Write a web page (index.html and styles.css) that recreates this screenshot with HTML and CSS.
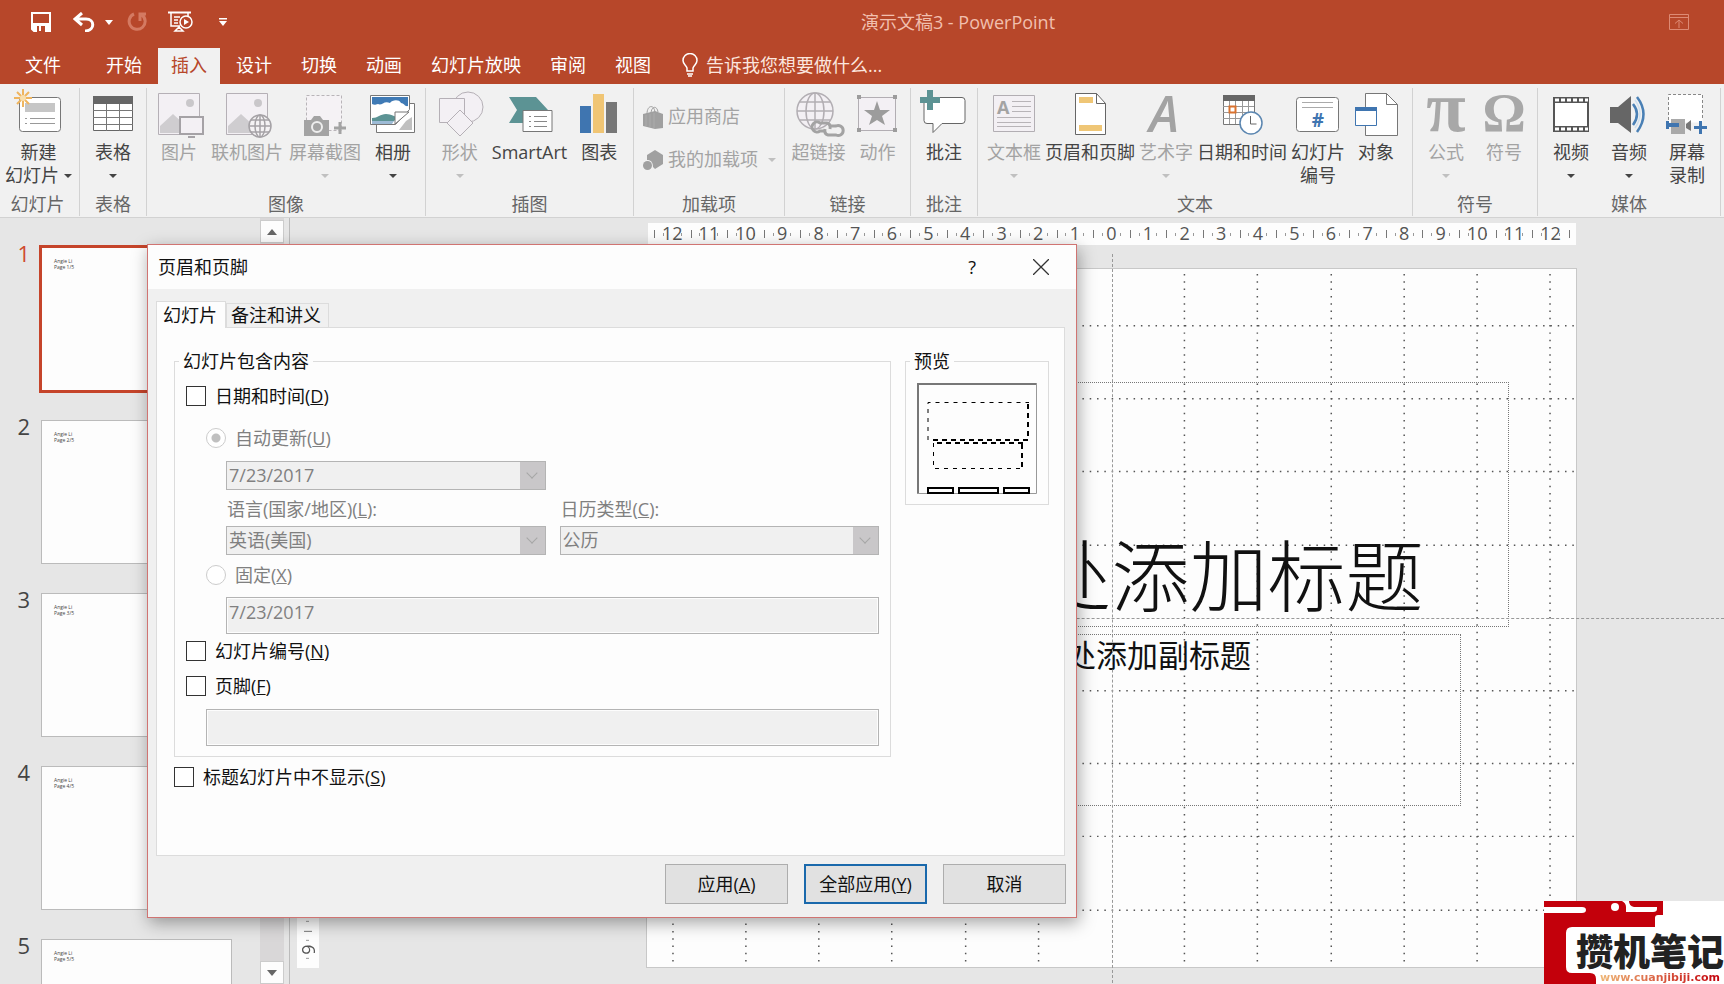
FILE: index.html
```html
<!DOCTYPE html>
<html lang="zh-CN">
  <head>
    <meta charset="UTF-8" />
    <meta name="viewport" content="width=device-width, initial-scale=1.0" />
    <title>演示文稿3 - PowerPoint</title>
    <link rel="stylesheet" href="styles.css">
  </head>
  <body>
    <header class="header">
      <div class="titlebar">
        <div class="quick">
          <button class="q-save" aria-label="保存">
            <svg width="20" height="20" viewBox="0 0 20 20"><path d="M1 1h18v18H3l-2-2z" fill="none" stroke="#fff" stroke-width="2"/><path d="M2 11h16v8H2z" fill="#fff"/><path d="M6 14h8v6H6z" fill="#b7472a"/><path d="M8 14h2v5H8z" fill="#fff"/></svg>
          </button>
          <button class="q-undo" aria-label="撤消">
            <svg width="22" height="20" viewBox="0 0 22 20"><path d="M9 1L2 7l7 6M3 7h10c9 0 9 11 0 12h-1" fill="none" stroke="#fff" stroke-width="3"/></svg>
            <svg width="8" height="5" viewBox="0 0 8 5"><path d="M0 0h8L4 5z" fill="#fff"/></svg>
          </button>
          <button class="q-redo" aria-label="重复">
            <svg width="20" height="20" viewBox="0 0 20 20"><path d="M7 2a8 8 0 1 0 8 1M19 2h-6v7" fill="none" stroke="#d47a62" stroke-width="3"/></svg>
          </button>
          <button class="q-show" aria-label="从头开始">
            <svg width="25" height="22" viewBox="0 0 25 22" fill="none" stroke="#fff" stroke-width="1.5"><path d="M0 1.500h23" stroke-width="2"/><path d="M3 2v13h9M20 2v4M6 6h6M6 9h4M6 12h4M11 16l-4 4h8l-4-4"/><circle cx="18" cy="11" r="6"/><path d="M16 8l5 3-5 3z" fill="#fff" stroke="none"/></svg>
          </button>
          <button class="q-more" aria-label="自定义快速访问工具栏">
            <svg width="8" height="8" viewBox="0 0 8 8" fill="#fff"><path d="M0 0h8v1.500H0zM0 3h8L4 8z"/></svg>
          </button>
        </div>
        <div class="doc-title">演示文稿3 - PowerPoint</div>
        <button class="pin" aria-label="功能区显示选项">
          <svg width="20" height="16" viewBox="0 0 20 16" fill="none" stroke="#dd8a74"><path d="M.5.5h19v15H.5zM.5 3.500h19M10 14V6M6 9.500L10 6l4 3.500"/></svg>
        </button>
      </div>
      <nav class="tabs">
        <button class="file">文件</button>
        <button>开始</button>
        <button class="active">插入</button>
        <button>设计</button>
        <button>切换</button>
        <button>动画</button>
        <button>幻灯片放映</button>
        <button>审阅</button>
        <button>视图</button>
        <button class="tell">
          <svg width="16" height="24" viewBox="0 0 16 24" fill="none" stroke="#fff" stroke-width="1.500"><path d="M5 18v-3C4 12 1 11 1 7.500a7 7 0 0 1 14 0C15 11 12 12 11 15v3z"/><path d="M5 21h6M6 23h4"/></svg>
          告诉我您想要做什么...
        </button>
      </nav>
    </header>

    <div class="ribbon">
      <!-- 幻灯片 -->
      <section class="group g-slide">
        <div class="tools">
          <button class="tool">
            <svg viewBox="0 0 50 50"><rect x="5.500" y="9.500" width="41" height="34" rx="3" fill="#fff" stroke="#777"/><path d="M11 15h30v9H11z" fill="#c6c6c6"/><path d="M11 30.500h2m3 0h25M11 35.500h2m3 0h25" stroke="#999"/><path d="M9 1v18M0 10h18M3 4l12 12M15 4L3 16" stroke="#efb55f" stroke-width="2"/><circle cx="9" cy="10" r="3" fill="#f9dfae"/></svg>
            <span>新建</span>
            <span class="with-arrow">幻灯片<i class="arrow"></i></span>
          </button>
        </div>
        <h2>幻灯片</h2>
      </section>
      <!-- 表格 -->
      <section class="group g-one">
        <div class="tools">
          <button class="tool">
            <svg viewBox="0 0 50 50"><path d="M5.500 8.500h39v34h-39z" fill="#fff" stroke="#666"/><path d="M5 8h40v8H5z" fill="#666"/><path d="M18.500 16v27M31.500 16v27M5 22.500h40M5 29.500h40M5 36.500h40" stroke="#777"/></svg>
            <span>表格</span>
            <i class="arrow"></i>
          </button>
        </div>
        <h2>表格</h2>
      </section>
      <!-- 图像 -->
      <section class="group g-image">
        <div class="tools">
          <button class="tool" disabled>
            <svg viewBox="0 0 50 50"><path d="M4.500 5.500h41v41h-41z" fill="#f3f0f4" stroke="#b5b0b6"/><circle cx="36" cy="15" r="4" fill="#c9c7ca"/><path d="M6 45V38L19 26l12 11v8z" fill="#cfcdd0"/><path d="M26 29h23v17H26z" fill="#f3f0f4" stroke="#a5a2a6" stroke-width="2"/><path d="M34 49h7" stroke="#a5a2a6" stroke-width="2"/></svg>
            <span>图片</span>
          </button>
          <button class="tool" disabled>
            <svg viewBox="0 0 50 50"><path d="M4.500 5.500h41v41h-41z" fill="#f3f0f4" stroke="#b5b0b6"/><circle cx="36" cy="15" r="4" fill="#c9c7ca"/><path d="M6 45V38L19 26l12 11v8z" fill="#cfcdd0"/><g fill="none" stroke="#a5a2a6" stroke-width="1.500"><circle cx="38" cy="38" r="11" fill="#f5f3f5"/><ellipse cx="38" cy="38" rx="5" ry="11"/><path d="M38 27v22M27 38h22M29 32h18M29 44h18"/></g></svg>
            <span>联机图片</span>
          </button>
          <button class="tool" disabled>
            <svg viewBox="0 0 50 50"><path d="M6.500 7.500h35v35h-35z" fill="#f5f2f5" stroke="#b8b4b8" stroke-dasharray="3 2"/><path d="M4 32h7l3-4h6l3 4h6v16H4z" fill="#a3a3a3"/><circle cx="17" cy="39" r="5" fill="none" stroke="#eee" stroke-width="2"/><path d="M40 34v12M34 40h12" stroke="#a3a3a3" stroke-width="3"/></svg>
            <span>屏幕截图</span>
            <i class="arrow"></i>
          </button>
          <button class="tool">
            <svg viewBox="0 0 50 50"><path d="M8.500 15.500h38v29h-38z" fill="#fff" stroke="#777"/><path d="M11 42h33V29l-6 4-7 9z" fill="#c0c0c0"/><path d="M2.500 7.500h39v14l-14 15h-25z" fill="#fff" stroke="#777"/><path d="M4 9h36v9c-3 1-4-3-7-3-2-4-9-3-11 0-6-3-8 3-12 1-3 1-4 1-6 0z" fill="#3f7ab5"/><path d="M4 30c6 0 8-4 14-4s8 3 12 3l-4 4-22 1z" fill="#5c9394"/><path d="M4 33h22l-2 3H4z" fill="#9dbbd6"/><path d="M27 36V24h14z" fill="#fff" stroke="#777"/></svg>
            <span>相册</span>
            <i class="arrow"></i>
          </button>
        </div>
        <h2>图像</h2>
      </section>
      <!-- 插图 -->
      <section class="group g-art">
        <div class="tools">
          <button class="tool" disabled>
            <svg viewBox="0 0 50 50" fill="#f3f0f4" stroke="#b5b0b6"><circle cx="33" cy="19" r="15"/><path d="M4.500 10.500h25v24h-25z"/><path d="M25 22l13 13-13 13-13-13z"/></svg>
            <span>形状</span>
            <i class="arrow"></i>
          </button>
          <button class="tool">
            <svg viewBox="0 0 50 50"><path d="M4 9h27l12 13-12 13H4l8-13z" fill="#5c9394"/><path d="M18 22.500h29v21H18z" fill="#fff" stroke="#777"/><path d="M24 28.500h2m3 0h13M24 33.500h2m3 0h13M24 38.500h2m3 0h13" stroke="#888"/></svg>
            <span>SmartArt</span>
          </button>
          <button class="tool">
            <svg viewBox="0 0 50 50"><path d="M6 18h11v27H6z" fill="#3f75b0"/><path d="M19 6h11v39H19z" fill="#f0c574"/><path d="M32 14h11v31H32z" fill="#777"/></svg>
            <span>图表</span>
          </button>
        </div>
        <h2>插图</h2>
      </section>
      <!-- 加载项 -->
      <section class="group g-addin">
        <div class="tools rows">
          <button class="row-tool" disabled>
            <svg width="20" height="24" viewBox="0 0 20 24"><path d="M0 9l12-3 8 3v14l-8 1-12-3z" fill="#a0a0a0"/><path d="M4 9C4 0 11-1 12 7M8 9c0-8 6-9 7-2" fill="none" stroke="#a0a0a0"/><path d="M3 10v11M7 9v13M11 8v15" stroke="#acacac"/></svg>
            <span>应用商店</span>
          </button>
          <button class="row-tool" disabled>
            <svg width="20" height="20" viewBox="0 0 20 20" fill="#a0a0a0"><path d="M4 5l8-5 8 5v9l-8 5-2-2c0-6-3-7-6-7z"/><circle cx="4.500" cy="15.500" r="4.500"/></svg>
            <span>我的加载项</span>
            <i class="arrow"></i>
          </button>
        </div>
        <h2>加载项</h2>
      </section>
      <!-- 链接 -->
      <section class="group g-link">
        <div class="tools">
          <button class="tool" disabled>
            <svg viewBox="0 0 50 50" fill="none"><g stroke="#b2aeb3" stroke-width="1.500"><circle cx="21" cy="23" r="18" fill="#f3f0f4"/><ellipse cx="21" cy="23" rx="9" ry="18"/><path d="M21 5v36M3 23h36M6 14h30M6 32h30"/></g><path d="M32 43h-6a5 5 0 1 1 0-8h7q4 1 3 6M35 38h7a5 5 0 1 1 0 9h-8q-4-1-3-6" stroke="#a3a3a3" stroke-width="3"/></svg>
            <span>超链接</span>
          </button>
          <button class="tool" disabled>
            <svg viewBox="0 0 50 50"><path d="M5.500 9.500h37v33h-37z" fill="#f3f0f4" stroke="#b2aeb3"/><path d="M4 7h4v4H4zM40 7h4v4h-4zM4 40h4v4H4zM40 40h4v4h-4zM24 13l3 9h10l-8 6 3 9-8-5-8 5 3-9-8-6h10z" fill="#9c9c9c"/></svg>
            <span>动作</span>
          </button>
        </div>
        <h2>链接</h2>
      </section>
      <!-- 批注 -->
      <section class="group g-one">
        <div class="tools">
          <button class="tool">
            <svg viewBox="0 0 50 50"><path d="M7 9.500h36q3 0 3 3v20q0 3-3 3H23l-9 9v-9H8q-3 0-3-3V12q0-3 2-2.500z" fill="#fff" stroke="#666"/><path d="M8 2h6v7h7v6h-7v7H8v-7H1V9h7z" fill="#5c9394"/></svg>
            <span>批注</span>
          </button>
        </div>
        <h2>批注</h2>
      </section>
      <!-- 文本 -->
      <section class="group g-text">
        <div class="tools">
          <button class="tool" disabled>
            <svg viewBox="0 0 50 50"><path d="M4.500 7.500h41v36h-41z" fill="#f3f0f4" stroke="#b2aeb3"/><text x="8" y="26" class="ico-a">A</text><path d="M23 13.500h19M23 18.500h19M23 23.500h19M8 29.500h34M8 34.500h34M8 38.500h34" stroke="#b8b4b8"/></svg>
            <span>文本框</span>
            <i class="arrow"></i>
          </button>
          <button class="tool">
            <svg viewBox="0 0 50 50"><path d="M10.500 5.500h21l9 10v31h-30z" fill="#fff" stroke="#666"/><path d="M31.500 5.500v10h9" fill="none" stroke="#666"/><path d="M14 9h14v6H14zM14 37h23v6H14z" fill="#efc676"/></svg>
            <span>页眉和页脚</span>
          </button>
          <button class="tool" disabled>
            <svg viewBox="0 0 50 50"><text x="23" y="44" class="ico-art">A</text></svg>
            <span>艺术字</span>
            <i class="arrow"></i>
          </button>
          <button class="tool">
            <svg viewBox="0 0 50 50"><path d="M6.500 7.500h31v29h-31z" fill="#fff" stroke="#777"/><path d="M6 7h32v6H6z" fill="#666"/><path d="M12.500 13v23M18.500 13v23M25.500 13v23M31.500 13v23M6 18.500h31M6 24.500h31M6 30.500h31" stroke="#999"/><path d="M12.500 18.500h6v6h-6z" fill="#fff" stroke="#d9722f" stroke-width="2"/><circle cx="34" cy="35" r="11" fill="#fff" stroke="#5b86b0" stroke-width="1.500"/><path d="M33.500 28v8h6" fill="none" stroke="#666"/></svg>
            <span>日期和时间</span>
          </button>
          <button class="tool">
            <svg viewBox="0 0 50 50"><rect x="3.500" y="9.500" width="42" height="34" rx="3" fill="#fff" stroke="#777"/><path d="M9 14.500h31M9 19.500h31" stroke="#aaa"/><text x="25" y="39" class="ico-hash">#</text></svg>
            <span>幻灯片</span>
            <span>编号</span>
          </button>
          <button class="tool">
            <svg viewBox="0 0 50 50"><path d="M14.500 5.500h21l11 11v31h-32z" fill="#fff" stroke="#777"/><path d="M35.500 5.500v11h11" fill="none" stroke="#777"/><path d="M4.500 19.500h21v18h-21z" fill="#fff" stroke="#3f75b0"/><path d="M4 19h22v4H4z" fill="#3f75b0"/></svg>
            <span>对象</span>
          </button>
        </div>
        <h2>文本</h2>
      </section>
      <!-- 符号 -->
      <section class="group g-symbol">
        <div class="tools">
          <button class="tool" disabled>
            <svg viewBox="0 0 50 50"><text x="25" y="43" class="ico-pi">π</text></svg>
            <span>公式</span>
            <i class="arrow"></i>
          </button>
          <button class="tool" disabled>
            <svg viewBox="0 0 50 50"><text x="25" y="43" class="ico-omega">Ω</text></svg>
            <span>符号</span>
          </button>
        </div>
        <h2>符号</h2>
      </section>
      <!-- 媒体 -->
      <section class="group g-media">
        <div class="tools">
          <button class="tool">
            <svg viewBox="0 0 50 50"><path d="M7 9h36v35H7z" fill="#555"/><path d="M9 15h32v23H9z" fill="#fff"/><path d="M9 12h33M9 41h33" stroke="#fff" stroke-width="3" stroke-dasharray="4 2"/></svg>
            <span>视频</span>
            <i class="arrow"></i>
          </button>
          <button class="tool">
            <svg viewBox="0 0 50 50"><path d="M6 19h8L27 8v37L14 35H6z" fill="#666"/><path d="M29 16q8 10 0 21M33 9q13 17 0 35" fill="none" stroke="#4a80b5" stroke-width="2.500"/><path d="M31 12q10 14 0 28" fill="none" stroke="#cfe0ee" stroke-width="1.500"/></svg>
            <span>音频</span>
            <i class="arrow"></i>
          </button>
          <button class="tool">
            <svg viewBox="0 0 50 50"><path d="M6.500 6.500h34v28h-34z" fill="#fff"/><path d="M6.500 32V6.500h34V32" fill="none" stroke="#888" stroke-dasharray="3 2"/><path d="M9 31h14v15H9z" fill="#a9a9a9"/><path d="M24 36l5-4v11l-5-3z" fill="#777"/><path d="M4 33h3v2h10v4H7v2H4zM37 33h3v5h5v3h-5v5h-3v-5h-5v-3h5z" fill="#3f75b0"/></svg>
            <span>屏幕</span>
            <span>录制</span>
          </button>
        </div>
        <h2>媒体</h2>
      </section>
    </div>

    <main class="workspace">
      <aside class="pane">
        <ol class="thumbs">
          <li class="current"><b>1</b><div class="thumb">Angie Li<br>Page 1/5</div></li>
          <li><b>2</b><div class="thumb">Angie Li<br>Page 2/5</div></li>
          <li><b>3</b><div class="thumb">Angie Li<br>Page 3/5</div></li>
          <li><b>4</b><div class="thumb">Angie Li<br>Page 4/5</div></li>
          <li><b>5</b><div class="thumb">Angie Li<br>Page 5/5</div></li>
        </ol>
        <div class="scrollbar">
          <button aria-label="向上"><svg width="10" height="6" viewBox="0 0 12 7"><path d="M0 7h12L6 0z" fill="#666"/></svg></button>
          <button aria-label="向下"><svg width="10" height="6" viewBox="0 0 12 7"><path d="M0 0h12L6 7z" fill="#666"/></svg></button>
        </div>
      </aside>

      <div class="editor">
        <div class="ruler">
          <span>12</span><span>11</span><span>10</span><span>9</span><span>8</span><span>7</span><span>6</span><span>5</span><span>4</span><span>3</span><span>2</span><span>1</span><span>0</span><span>1</span><span>2</span><span>3</span><span>4</span><span>5</span><span>6</span><span>7</span><span>8</span><span>9</span><span>10</span><span>11</span><span>12</span>
        </div>
        <div class="ruler-v">
          <span>9</span><span>8</span><span>7</span><span>6</span><span>5</span><span>4</span><span>3</span><span>2</span><span>1</span><span>0</span><span>1</span><span>2</span><span>3</span><span>4</span><span>5</span><span>6</span><span>7</span><span>8</span><span>9</span>
        </div>
        <div class="slide">
          <svg class="grid-lines" viewBox="0 0 930 700" preserveAspectRatio="none">
            <g stroke="#555" stroke-width="1.500" stroke-dasharray="1.500 5.820">
              <path d="M26 5v695M99 5v695M172 5v695M245 5v695M319 5v695M392 5v695M538 5v695M611 5v695M685 5v695M758 5v695M831 5v695M904 5v695"/>
              <path d="M4 57h926M4 130h926M4 203h926M4 277h926M4 423h926M4 496h926M4 569h926M4 643h926"/>
            </g>
          </svg>
          <div class="holder title-holder">单击此处添加标题</div>
          <div class="holder sub-holder">单击此处添加副标题</div>
          <i class="guide-v"></i>
          <i class="guide-h"></i>
        </div>
      </div>

      <!-- 页眉和页脚 对话框 -->
      <form class="dialog" role="dialog" aria-labelledby="dialogTitle">
        <div class="dialog-title">
          <h1 id="dialogTitle">页眉和页脚</h1>
          <button type="button" class="help" aria-label="帮助">?</button>
          <button type="button" class="close" aria-label="关闭"><svg width="16" height="16" viewBox="0 0 16 16"><path d="M0 0l16 16M16 0L0 16" stroke="#333" stroke-width="1.300"/></svg></button>
        </div>
        <div class="dialog-tabs">
          <button type="button" class="active">幻灯片</button>
          <button type="button">备注和讲义</button>
        </div>
        <div class="panel">
          <div class="columns">
            <fieldset class="content">
              <legend>幻灯片包含内容</legend>
              <label class="option date"><input type="checkbox">日期和时间(<u>D</u>)</label>
              <label class="option sub auto off"><input type="radio" name="dateMode" checked disabled>自动更新(<u>U</u>)</label>
              <div class="pair">
                <span class="combo"><select aria-label="日期格式" disabled><option>7/23/2017</option></select></span>
              </div>
              <div class="pair captions off">
                <label for="lang">语言(国家/地区)(<u>L</u>):</label>
                <label for="calendar">日历类型(<u>C</u>):</label>
              </div>
              <div class="pair">
                <span class="combo"><select id="lang" disabled><option>英语(美国)</option></select></span>
                <span class="combo"><select id="calendar" disabled><option>公历</option></select></span>
              </div>
              <label class="option sub fixed off"><input type="radio" name="dateMode" disabled>固定(<u>X</u>)</label>
              <input class="field fixed-date" type="text" value="7/23/2017" aria-label="固定日期" disabled>
              <label class="option number"><input type="checkbox">幻灯片编号(<u>N</u>)</label>
              <label class="option footer"><input type="checkbox">页脚(<u>F</u>)</label>
              <input class="field footer-text" type="text" aria-label="页脚" disabled>
            </fieldset>
            <fieldset class="preview">
              <legend>预览</legend>
              <svg width="120" height="111" viewBox="0 0 120 111" fill="none" stroke="#000"><path d="M1 110V1h118" stroke="#777" stroke-width="2"/><path d="M119.500 0v110.500H0" stroke="#999"/><path d="M11 57V19.500h101" stroke-dasharray="4 5"/><path d="M111 21v34" stroke-width="2" stroke-dasharray="5 4"/><path d="M16 57h95M20 60h86" stroke-width="2" stroke-dasharray="5 4"/><path d="M105 61v24" stroke-width="2" stroke-dasharray="5 4"/><path d="M16.500 60v25.500H105" stroke-dasharray="4 5"/><path d="M11 105h25v5H11zM42 105h39v5H42zM87 105h25v5H87z" stroke-width="2"/></svg>
            </fieldset>
          </div>
          <label class="option hide-title"><input type="checkbox">标题幻灯片中不显示(<u>S</u>)</label>
        </div>
        <div class="actions">
          <button type="button">应用(<u>A</u>)</button>
          <button type="button" class="default">全部应用(<u>Y</u>)</button>
          <button type="button">取消</button>
        </div>
      </form>

      <div class="watermark">
        <svg width="180" height="83" viewBox="0 0 180 83"><path d="M0 0h119v14h-5q-3 0-3 3v9h-83q-6 0-6 6v34q0 6 6 6h18q6 0 6 6v5H0z" fill="#c3000b"/><path d="M0 6h38q4 0 4 3t-4 3H0zM78 0q4 2 4 6v5h27q4 0 4-3V6H90q-5-1-5-6z" fill="#fff"/><circle cx="71" cy="6" r="4" fill="#fff"/></svg>
        <strong>攒机笔记</strong>
        <span>www.cuanjibiji.com</span>
      </div>
    </main>
  </body>
</html>
```

FILE: styles.css
```css
* {
  box-sizing: border-box;
}

body {
  margin: 0;
  height: 100vh;
  display: flex;
  flex-direction: column;
  overflow: hidden;
  background: #e6e6e6;
  color: #444;
  font-family: "Open Sans", "Noto Sans CJK SC", sans-serif;
  font-size: 18px;
  line-height: 23px;
}

button {
  margin: 0;
  padding: 0;
  border: 0;
  background: none;
  color: inherit;
  font: inherit;
}

svg {
  display: block;
}

/* 标题栏 */
.header {
  background: #b7472a;
  color: #fff;
}

.titlebar {
  display: flex;
  align-items: center;
  height: 48px;
  padding-bottom: 4px;
}

.quick {
  display: flex;
  align-items: center;
  width: 250px;
  padding-left: 31px;
}

.q-undo {
  display: flex;
  align-items: center;
  gap: 10px;
  margin: 0 14px 0 22px;
}

.q-show {
  margin: 0 26px 0 21px;
}

.doc-title {
  flex: 1;
  text-align: center;
  color: #f1bfae;
}

.pin {
  width: 58px;
  padding-left: 3px;
}

.tabs {
  display: flex;
  gap: 3px;
  height: 36px;
}

.tabs button {
  padding: 0 13px 2px;
}

.tabs .file {
  width: 86px;
  margin-right: 4px;
}

.tabs .active {
  background: #f1f1f1;
  color: #b7472a;
}

.tabs .tell {
  display: flex;
  align-items: center;
  gap: 8px;
  padding-left: 15px;
  color: #fbe6df;
}

/* 功能区 */
.ribbon {
  display: flex;
  height: 134px;
  padding: 4px 0 0;
  background: #f1f1f1;
  border-bottom: 1px solid #d2d2d2;
}

.group {
  flex: none;
  display: flex;
  flex-direction: column;
  height: 128px;
  border-right: 1px solid #d2d2d2;
}

.g-slide { width: 80px; }
.g-one { width: 67px; }
.g-image { width: 279px; }
.g-art { width: 208px; }
.g-addin { width: 151px; }
.g-link { width: 126px; }
.g-text { width: 435px; }
.g-symbol { width: 125px; }
.g-media { width: 183px; }

.group h2 {
  margin: 0;
  font-size: 18px;
  font-weight: 400;
  line-height: 23px;
  text-align: center;
  color: #666;
}

.g-slide,
.g-slide h2 {
  padding-right: 2px;
}

.tools {
  flex: 1;
  display: flex;
  justify-content: center;
}

.tool {
  flex: none;
  display: flex;
  flex-direction: column;
  align-items: center;
  min-width: 58px;
  padding: 0 3px;
  white-space: nowrap;
}

.g-text .tool {
  padding: 0 2px;
}

.tool svg {
  width: 50px;
  height: 50px;
  margin-bottom: 3px;
  overflow: visible;
}

.tool:disabled,
.row-tool:disabled {
  color: #a3a3a3;
}

.arrow {
  width: 0;
  height: 0;
  border: 4px solid transparent;
  border-top-color: currentColor;
  border-bottom: 0;
}

.tool > .arrow {
  margin-top: 10px;
}

:disabled > .arrow {
  color: #c0c0c0;
}

.with-arrow {
  display: flex;
  align-items: center;
  gap: 5px;
}

.rows {
  flex-direction: column;
  justify-content: flex-start;
  gap: 20px;
  padding: 17px 0 0 9px;
}

.row-tool {
  display: flex;
  align-items: center;
  gap: 5px;
  height: 23px;
}

.row-tool .arrow {
  margin-left: 5px;
}

.ico-a {
  font: 700 18px "Open Sans", sans-serif;
  fill: #a3a3a3;
}

.ico-art {
  font: italic 600 50px "Open Sans", sans-serif;
  text-anchor: middle;
  fill: #a3a3a3;
}

.ico-hash {
  font: 700 19px "Open Sans", sans-serif;
  text-anchor: middle;
  fill: #3f75b0;
}

.ico-pi,
.ico-omega {
  font: 700 54px "Liberation Serif", serif;
  text-anchor: middle;
  fill: #a8a8a8;
}

.ico-pi {
  font-size: 72px;
}

/* 工作区 */
.workspace {
  position: relative;
  flex: 1;
  min-height: 0;
  display: flex;
  overflow: hidden;
}

.pane {
  flex: none;
  display: flex;
  width: 290px;
  padding-right: 5px;
  border-right: 1px solid #bbb;
  overflow: hidden;
}

.thumbs {
  flex: 1;
  display: flex;
  flex-direction: column;
  gap: 29px;
  margin: 0;
  padding: 29px 0 0;
  list-style: none;
}

.thumbs li {
  flex: none;
  display: grid;
  grid-template-columns: 30px 191px;
  column-gap: 11px;
  height: 144px;
}

.thumbs b {
  font-size: 22px;
  font-weight: 400;
  line-height: 12px;
  text-align: right;
}

.thumb {
  padding: 10px 12px;
  background: #fdfdfd;
  border: 1px solid #bbb;
  font-size: 5px;
  line-height: 6px;
}

.current b {
  color: #cf4a2c;
}

.current .thumb {
  border-color: #c5442a;
  outline: 2px solid #c5442a;
}

.scrollbar {
  display: flex;
  flex-direction: column;
  justify-content: space-between;
  width: 24px;
  padding-top: 2px;
  background: #d9d7d8;
}

.scrollbar button {
  display: grid;
  place-items: center;
  height: 23px;
  background: #fdfdfd;
  border: 1px solid #ccc;
}

.editor {
  flex: 1;
  display: grid;
  grid-template-columns: 22px 1fr;
  grid-template-rows: 22px 1fr;
  gap: 23px 327px;
  padding: 5px 147px 16px 7px;
  overflow: hidden;
}

.ruler,
.ruler-v {
  display: flex;
  background: #fdfdfd;
  color: #555;
}

.ruler {
  grid-column: 2;
  margin: 0 1px 0 2px;
  padding: 0 6px;
  line-height: 20px;
}

/* 半格长刻度，四分之一格短刻度 */
.ruler span {
  flex: 1 1 0;
  text-align: center;
  background:
    linear-gradient(#777, #777) 0 50% / 1px 8px no-repeat,
    linear-gradient(#999, #999) 25% 50% / 1px 3px no-repeat,
    linear-gradient(#999, #999) 75% 50% / 1px 3px no-repeat;
}

.ruler::after {
  content: "";
  align-self: center;
  width: 1px;
  height: 8px;
  background: #777;
}

.ruler-v {
  flex-direction: column;
}

.ruler-v span {
  flex: 1 1 0;
  writing-mode: vertical-rl;
  transform: rotate(180deg);
  line-height: 22px;
  text-align: center;
  background:
    linear-gradient(#777, #777) 50% 100% / 8px 1px no-repeat,
    linear-gradient(#999, #999) 50% 25% / 3px 1px no-repeat,
    linear-gradient(#999, #999) 50% 75% / 3px 1px no-repeat;
}

.slide {
  position: relative;
  background: #fdfdfd;
  border: 1px solid #c8c8c8;
}

.grid-lines {
  position: absolute;
  width: 100%;
  height: 100%;
}

.holder {
  position: absolute;
  border: 1px dotted #777;
  color: #111;
  text-align: center;
}

.title-holder {
  inset: 113px 67px 340px;
  padding-top: 145px;
  font-size: 78px;
  font-weight: 300;
  line-height: 96px;
}

.sub-holder {
  inset: 365px 115px 161px;
  font-size: 31px;
  line-height: 40px;
}

.guide-v,
.guide-h {
  position: absolute;
}

.guide-v {
  top: -15px;
  bottom: -16px;
  left: 50%;
  border-left: 1px dashed #999;
}

.guide-h {
  top: 50%;
  left: 0;
  right: -148px;
  border-top: 1px dashed #999;
}

/* 对话框 */
.dialog {
  position: absolute;
  top: 26px;
  left: 147px;
  width: 930px;
  background: #f0f0f0;
  border: 1px solid #d07472;
  box-shadow: 2px 5px 16px rgba(0, 0, 0, 0.35);
  color: #111;
}

.dialog-title {
  display: flex;
  align-items: center;
  height: 44px;
  padding: 0 27px 0 10px;
  background: #fdfdfd;
}

.dialog-title h1 {
  flex: 1;
  margin: 0;
  font-size: 18px;
  font-weight: 400;
}

.help {
  margin-right: 57px;
}

.dialog-tabs {
  display: flex;
  align-items: flex-end;
  padding: 12px 8px 0;
}

.dialog-tabs button {
  height: 24px;
  padding: 0 7px 0 4px;
  border: 1px solid #dcdcdc;
  border-bottom: 0;
}

.dialog-tabs .active {
  position: relative;
  height: 27px;
  margin-bottom: -1px;
  padding: 0 8px 0 6px;
  background: #fdfdfd;
}

.panel {
  height: 529px;
  margin: 0 11px 0 8px;
  padding: 22px 15px 0 17px;
  background: #fdfdfd;
  border: 1px solid #dcdcdc;
}

.columns {
  display: flex;
  align-items: flex-start;
  gap: 14px;
}

fieldset {
  min-width: 0;
  margin: 0;
  border: 1px solid #dcdcdc;
}

legend {
  margin-left: -7px;
  padding: 0 4px;
  line-height: 22px;
}

.content {
  flex: 1;
  display: flex;
  flex-direction: column;
  padding: 12px 11px 10px 11px;
}

.preview {
  width: 144px;
  padding: 11px 11px 10px;
}

.option {
  display: flex;
  align-items: center;
  height: 24px;
}

.option input {
  flex: none;
  appearance: none;
  width: 20px;
  height: 20px;
  margin: 0 9px 0 0;
  border: 1px solid #333;
  background: #fff;
}

.option input[type="radio"] {
  border: 1px solid #ccc;
  border-radius: 50%;
}

.option input[type="radio"]:checked {
  background: radial-gradient(circle, #c0c0c0 4px, #fff 5px);
}

.off {
  color: #808080;
}

.sub {
  margin-left: 20px;
}

.auto {
  margin-top: 18px;
  margin-bottom: 11px;
}

.pair {
  display: grid;
  grid-template-columns: 1fr 1fr;
  gap: 14px;
  margin-left: 40px;
}

.captions {
  margin-top: 8px;
  margin-bottom: 6px;
  line-height: 22px;
}

.captions label {
  padding-left: 1px;
}

.combo {
  position: relative;
  display: flex;
}

.combo select {
  appearance: none;
  width: 100%;
  height: 29px;
  padding: 0 2px;
  border: 1px solid #b4b4b4;
  border-radius: 0;
  background: linear-gradient(#c9c7c9, #c9c7c9) right / 25px 100% no-repeat #f0f0f0;
  color: #808080;
  font: inherit;
  opacity: 1;
}

.combo::after {
  content: "";
  position: absolute;
  top: 8px;
  right: 10px;
  width: 7px;
  height: 7px;
  border: solid #a6a6a6;
  border-width: 0 1px 1px 0;
  transform: rotate(45deg);
}

.fixed {
  margin-top: 8px;
}

.field {
  height: 37px;
  padding: 0 2px 7px;
  border: 1px solid #b4b4b4;
  background: #f0f0f0;
  box-shadow: inset 0 0 0 1px #fdfdfd;
  color: #808080;
  font: inherit;
}

.fixed-date {
  margin: 10px 0 5px 40px;
}

.footer {
  margin-top: 11px;
}

.footer-text {
  margin: 11px 0 0 20px;
}

.hide-title {
  margin-top: 8px;
}

.actions {
  display: flex;
  justify-content: flex-end;
  gap: 16px;
  padding: 8px 10px 13px;
}

.actions button {
  width: 123px;
  height: 40px;
  background: #e1e1e1;
  border: 1px solid #adadad;
}

.actions .default {
  border: 2px solid #1a69ac;
}

/* 右下角水印 */
.watermark {
  position: absolute;
  right: 0;
  bottom: 0;
  width: 180px;
  height: 83px;
  overflow: hidden;
  background: #fff;
}

.watermark strong {
  position: absolute;
  top: 32px;
  left: 32px;
  font-size: 37px;
  font-weight: 900;
  line-height: 37px;
  color: #222;
}

.watermark span {
  position: absolute;
  top: 70px;
  left: 56px;
  font: 700 11px/14px "DejaVu Sans", sans-serif;
  background: linear-gradient(90deg, #efb877, #c3000b);
  background-clip: text;
  color: transparent;
}
```
